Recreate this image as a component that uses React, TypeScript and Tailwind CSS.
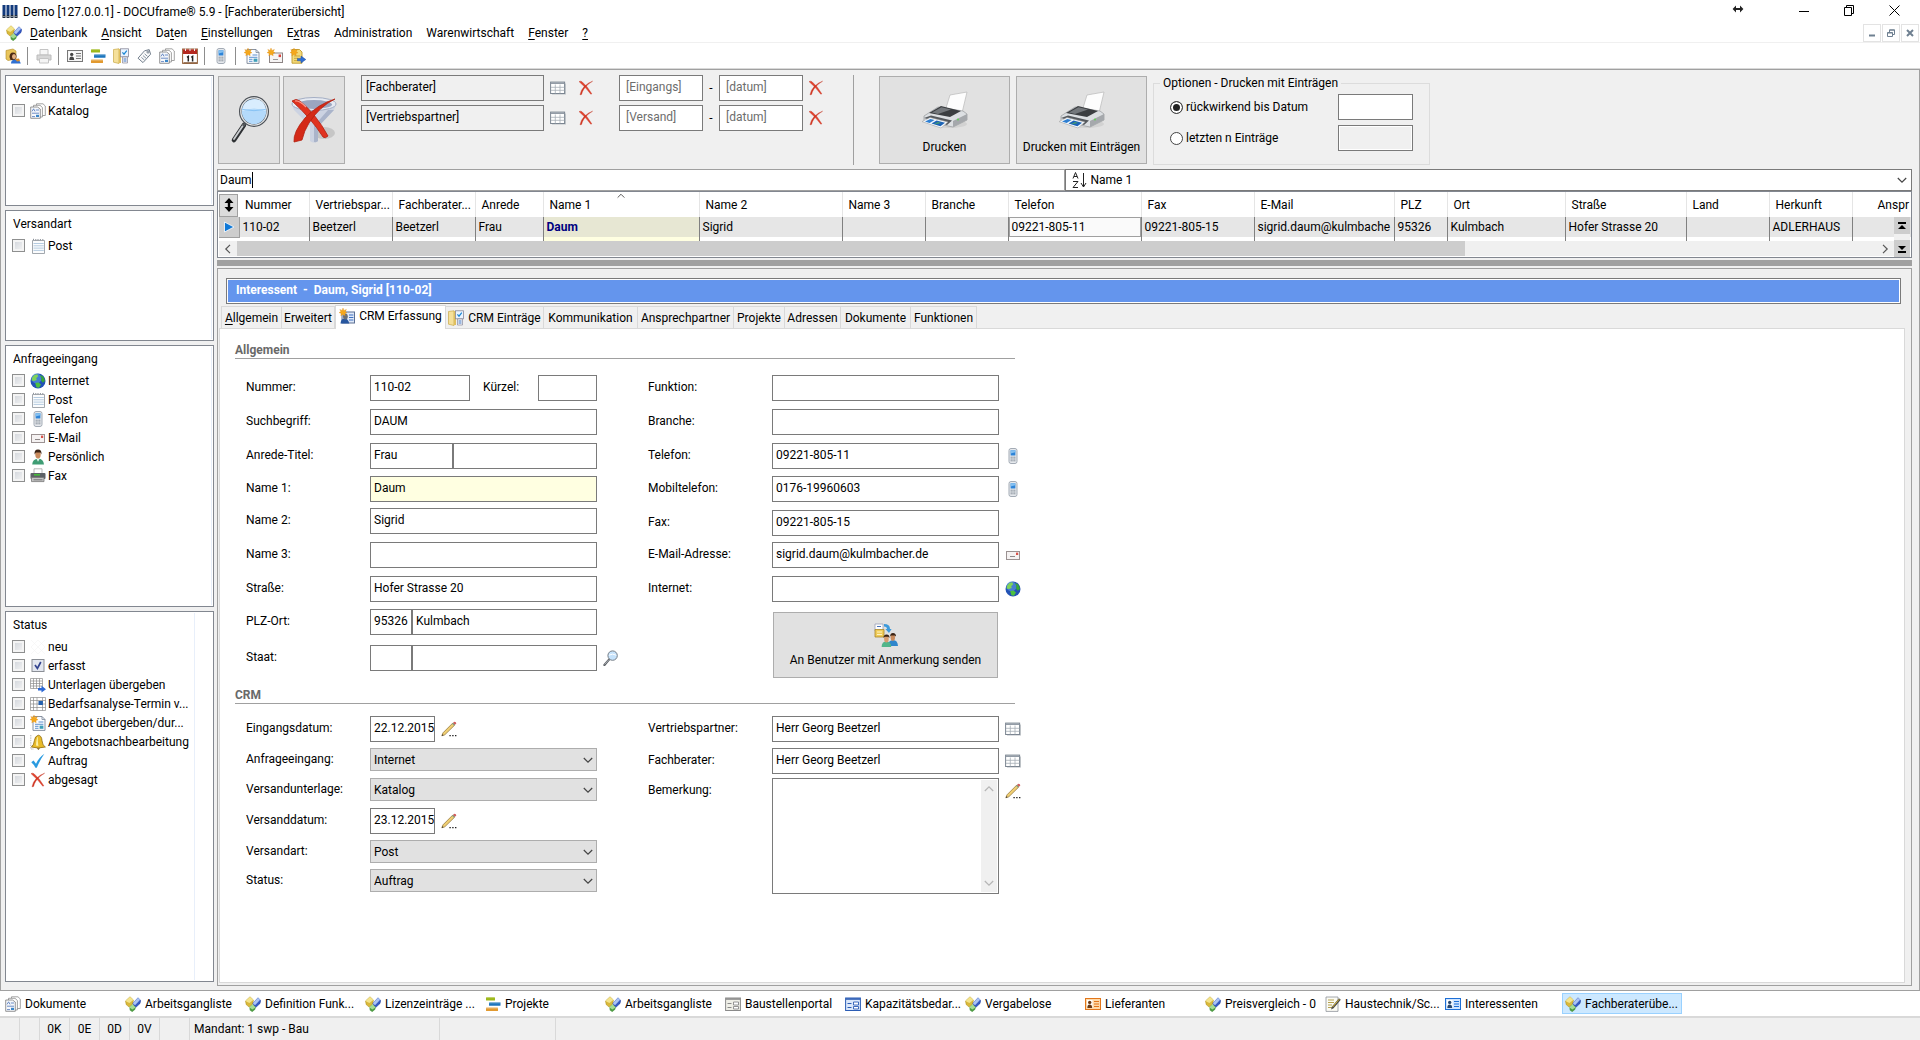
import type { ReactNode } from "react";

interface IconProps {
  className?: string;
}

interface SvgProps extends IconProps {
  box?: string;
  children: ReactNode;
}

const Svg = ({ box = "0 0 16 16", className = "size-4", children }: SvgProps) => (
  <svg viewBox={box} className={`shrink-0 ${className}`} fill="none" aria-hidden="true">
    {children}
  </svg>
);

/* ---------- icons ---------- */

const LogoIcon = () => (
  <Svg>
    {[0, 4, 8, 12].map((x) => (
      <g key={x}>
        <rect x={x + 0.5} y="1" width="3" height="10" fill="#123a7c" />
        <rect x={x + 0.5} y="11" width="3" height="3" fill="#1d2b3d" />
        <rect x={x + 1.5} y="12" width="1" height="1" fill="#dfe8f5" />
      </g>
    ))}
  </Svg>
);

const CubesIcon = () => (
  <Svg>
    <path d="M0.5 5 5 0.8 8.4 4 7.8 8 4 11 1.2 8.6Z" fill="#d9b93a" stroke="#a98d1f" strokeWidth=".5" />
    <path d="M0.5 5 5 0.8 8.4 4 4.3 7Z" fill="#f3e48d" />
    <path d="M7.8 7.2 13 1.8 15.8 4.6 15 7.5 10.2 12Z" fill="#3458c4" stroke="#22409b" strokeWidth=".5" />
    <path d="M7.8 7.2 13 1.8 15.2 3.8 10 9.2Z" fill="#a9c3f5" />
    <path d="M4.4 11.4 7.3 8.6 10.8 11.2 10.2 13.6 7.2 16 4.8 14.2Z" fill="#4f9b45" />
    <path d="M4.4 11.4 7.3 8.6 10.8 11.2 7.4 13.4Z" fill="#a6dc92" />
  </Svg>
);

const UserIcon = () => (
  <Svg>
    <path d="M1 2.5 8 1 11 3V11L3 12.5 1 11Z" fill="#e9c55c" stroke="#b08a22" strokeWidth=".6" />
    <path d="M4.5 9Q4.5 4.5 8 4.5T11.5 9L10 12H5.5Z" fill="#4b2a16" />
    <ellipse cx="9" cy="8.6" rx="2" ry="2.6" fill="#e3b184" />
    <path d="M6 15.5Q6 11.5 10.4 11.5T15.8 15.5Z" fill="#2f6fd0" />
    <path d="M10 11 14 10.5 15 13 12 13.5Z" fill="#d98c2b" />
  </Svg>
);

const PrinterGrayIcon = () => (
  <Svg>
    <path d="M4 1.5H12V7H4Z" fill="#f6f6f6" stroke="#c4c4c4" />
    <path d="M1 7H15V12H1Z" fill="#d6d6d6" stroke="#bcbcbc" />
    <path d="M3.5 10.5H12.5V15H3.5Z" fill="#f4f4f4" stroke="#c4c4c4" />
  </Svg>
);

const CardIcon = ({ frame = "#777", fill = "#f4f4f4", ink = "#444" }) => (
  <Svg>
    <rect x=".5" y="2.5" width="15" height="11" fill={fill} stroke={frame} />
    <rect x="2" y="4" width="5.5" height="8" fill="#fff" />
    <circle cx="4.7" cy="6.4" r="1.7" fill={ink} />
    <path d="M2.3 12Q2.3 8.6 4.7 8.6T7.2 12Z" fill={ink} />
    <path d="M9 5.5H14M9 8H14M9 10.5H14" stroke={frame} />
  </Svg>
);

const BlueCardIcon = () => <CardIcon frame="#1d6fd6" fill="#cfe4ff" ink="#27476f" />;
const OrangeCardIcon = () => <CardIcon frame="#e2761b" fill="#ffd9a8" ink="#6b3a14" />;

const BarsIcon = () => (
  <Svg>
    <rect x="1" y="1" width="9" height="3.6" rx=".5" fill="#9db818" />
    <rect x="4" y="6.2" width="11.5" height="3.6" rx=".5" fill="#1c75bd" />
    <rect x="1" y="11.4" width="12" height="3.6" rx=".5" fill="#e29a30" />
    <path d="M1 1.6H10M4 6.8H15M1 12H13" stroke="#fff" strokeOpacity=".4" />
  </Svg>
);

const FolderCheckIcon = () => (
  <Svg>
    <path d="M.5 1.5 6 .8V15.5L.5 14.2Z" fill="#f5e09a" stroke="#c9a947" strokeWidth=".7" />
    <path d="M6 1H8V15H6Z" fill="#e0bf5e" />
    <rect x="7.5" y=".8" width="8" height="8" fill="#eaf4ff" stroke="#889" strokeWidth=".8" />
    <path d="M9.4 4.4 11 6.2 13.8 2.6" stroke="#1b87d4" strokeWidth="1.2" />
    <path d="M9.5 9H14.5V15H9.5Z" fill="#f7f7f7" stroke="#889" strokeWidth=".7" />
    <path d="M10.5 11H13.5M10.5 13H13.5" stroke="#3e76c7" />
  </Svg>
);

const TagIcon = () => (
  <Svg>
    <path d="M8.5 2.8 13.2 1.6 14.6 6.2 7 14.6 2 10.2Z" fill="#fafafa" stroke="#76828f" />
    <circle cx="12" cy="4" r="1.1" stroke="#76828f" />
    <path d="M5.4 9.4 8.4 12M7 7.6 10 10.2M8.6 5.8 11.5 8.4" stroke="#8795a3" />
  </Svg>
);

const DocsIcon = () => (
  <Svg>
    <path d="M6.5.8H13L15.3 3V12.5H6.5Z" fill="#fff" stroke="#8b8b8b" strokeWidth=".8" />
    <path d="M3.5 2.3H10L12.4 4.5V14H3.5Z" fill="#fff" stroke="#8b8b8b" strokeWidth=".8" />
    <path d="M.7 4H7.5L10.3 6V15.3H.7Z" fill="#f6f8fc" stroke="#7c7c7c" strokeWidth=".8" />
    <path d="M2 8.4 3.6 5.8 5 8.4M5.8 7H9M2 10.2H9M2 13.6H5" stroke="#4a72b8" strokeWidth=".8" />
    <rect x="6" y="11.8" width="3" height="2.2" fill="#3b86c9" />
  </Svg>
);

const CalendarIcon = () => (
  <Svg>
    <rect x=".6" y="1" width="14.8" height="14.4" fill="#fff" stroke="#94623a" />
    <rect x="1" y="1.4" width="14" height="4.6" fill="#b5281f" />
    <path d="M3.5.5V3M8 .5V3M12.5.5V3" stroke="#eee" />
    <path d="M5 9.3 6.3 8.4V13.5M9.3 9.3 10.6 8.4V13.5" stroke="#222" strokeWidth="1.5" />
    <path d="M1.5 14.8H15" stroke="#7d4d2a" />
  </Svg>
);

const PhoneIcon = () => (
  <Svg>
    <rect x="4" y=".5" width="8" height="15" rx="2" fill="#e6e9ed" stroke="#a3abb5" />
    <rect x="5.6" y="2.3" width="4.8" height="5.2" fill="#2d84d8" />
    <path d="M5.6 2.3H10.4V4.2L5.6 5.5Z" fill="#83bff0" />
    {[9.2, 11, 12.8].map((y) => (
      <path key={y} d={`M5.6 ${y}H10.4`} stroke="#76808c" strokeDasharray="1.2 .6" />
    ))}
  </Svg>
);

const Spark = () => (
  <path
    d="M4 0 4.9 2.4 7.4 1.4 6.3 3.7 8 4.8 5.9 5.4 6.2 7.8 4 6.6 1.8 7.8 2.1 5.4 0 4.6 1.9 3.6.8 1.4 3.1 2.4Z"
    fill="#f5a81c"
    stroke="#d8860d"
    strokeWidth=".3"
  />
);

const NewDocIcon = () => (
  <Svg>
    <path d="M3 1.5H12L15 4.5V15.4H3Z" fill="#fafcff" stroke="#7c8797" strokeWidth=".9" />
    <path d="M12 1.5V4.5H15" stroke="#7c8797" strokeWidth=".8" />
    <path d="M8.5 7H13.4M5 9.3H13.4M5 11.3H8.5M5 13.3H8.5" stroke="#5f91cf" />
    <rect x="9.6" y="10.6" width="3.8" height="3.2" fill="#3f9fb8" />
    <Spark />
  </Svg>
);

const NewMailIcon = () => (
  <Svg>
    <rect x="2.5" y="5" width="13" height="9.5" fill="#f6f4f4" stroke="#8d8585" />
    <rect x="11.6" y="6.5" width="2.4" height="2.6" fill="#d9433b" />
    <path d="M6 11.5H11" stroke="#9a9a9a" />
    <Spark />
  </Svg>
);

const NewFolderIcon = () => (
  <Svg>
    <path d="M2 1.5H9.5L12 4V15.2H2Z" fill="#f4da7a" stroke="#be9a2c" strokeWidth=".9" />
    <path d="M4 8H10M4 10.3H8M4 12.6H8" stroke="#cda93c" />
    <path d="M7.5 10.4H11V8L15.8 11.5 11 15V12.8H7.5Z" fill="#2f6fd6" stroke="#1b4a9c" strokeWidth=".5" />
    <Spark />
  </Svg>
);

const NotepadIcon = () => (
  <Svg>
    <path d="M2.5 2.5H14.5V15.5H2.5Z" fill="#fbfcfd" stroke="#8c9299" strokeWidth=".8" />
    <path d="M3.5 2V.8M5.8 2.4V1M8 2.4V1M10.4 2.4V1M12.8 2.4V1" stroke="#8c9299" />
    <path d="M3.5 5.5H13.8M3.5 7.8H13.8M3.5 10.1H13.8M3.5 12.4H13.8" stroke="#b4cbe0" />
  </Svg>
);

const GlobeIcon = () => (
  <Svg>
    <circle cx="8" cy="8" r="7.5" fill="#2352b5" />
    <circle cx="6.5" cy="5.5" r="5" fill="#5d9fe6" fillOpacity=".6" />
    <path d="M2.2 4.5Q4 1.4 7.2 1.3L8.2 3.2 6.2 5.2 6.8 7 4 8 1.6 7.4Z" fill="#7fd35a" />
    <path d="M9.8 2.3 12.6 3Q15 5.4 14.9 8L12.8 9.8 11 7.2 11.6 5Z" fill="#38a836" />
    <path d="M5.2 10 8.6 9.4 11 11.5 9 14.7 6.4 14.3Z" fill="#4cc13f" />
  </Svg>
);

const MailIcon = () => (
  <Svg>
    <rect x="1.5" y="4.5" width="13" height="8" fill="#f5f2f2" stroke="#9b9292" />
    <rect x="11" y="5.6" width="2.2" height="2.4" fill="#d9534b" />
    <path d="M5 9.5H10" stroke="#8e8888" />
  </Svg>
);

const PersonIcon = () => (
  <Svg>
    <path d="M2.2 15.6Q2.6 10 8 9.8T14 15.6Z" fill="#3f9d74" />
    <path d="M6.4 9.6 8 12.8 9.8 9.6Z" fill="#e9f5ef" />
    <ellipse cx="8" cy="5.6" rx="2.7" ry="4" fill="#c98a5c" />
    <path d="M4.6 5.4Q4 .4 8 .4T11.4 5.4L10.4 3.4H6Z" fill="#3a2213" />
  </Svg>
);

const FaxIcon = () => (
  <Svg>
    <path d="M4 .8H12V6H4Z" fill="#fff" stroke="#a5a5a5" strokeWidth=".8" />
    <rect x=".5" y="5" width="15" height="6" rx="1" fill="#5d6166" />
    <rect x="4" y="6" width="6" height="1.6" fill="#46b93a" />
    <path d="M1.5 9.5H14V13.6H1.5Z" fill="#c4c4c4" stroke="#777" strokeWidth=".8" />
    <path d="M3.5 11.8H12.5" stroke="#777" />
  </Svg>
);

const EmptyIcon = () => (
  <Svg>
    <path d="M1 1 15 15M15 1 1 15M8 1 15 8 8 15 1 8Z" stroke="#f4f4f4" strokeWidth=".6" />
  </Svg>
);

const CheckedIcon = () => (
  <Svg>
    <rect x="2" y="1.5" width="12" height="12" fill="#e3e7ef" stroke="#8b8f96" />
    <path d="M5 7 7.4 10.4 10.8 4" stroke="#33448f" strokeWidth="1.7" />
  </Svg>
);

const TableArrowIcon = () => (
  <Svg>
    <path d="M.5 1.5H12.5V11.5H.5ZM.5 4H12.5M.5 6.5H12.5M.5 9H12.5M3.5 1.5V11.5M6.5 1.5V11.5M9.5 1.5V11.5" stroke="#8b8b8b" fill="#fff" strokeWidth=".7" />
    <path d="M8 11H11.5V8.8L16 12.2 11.5 15.6V13.4H8Z" fill="#2c68d4" />
  </Svg>
);

const TableCellIcon = () => (
  <Svg>
    <path d="M.5 1.5H15.5V14.5H.5ZM.5 4.5H15.5M.5 8H15.5M.5 11.5H15.5M3.5 1.5V14.5M7 1.5V14.5M12.5 1.5V14.5" stroke="#8b8b8b" fill="#fff" strokeWidth=".7" />
    <rect x="8.5" y="5" width="4.4" height="4" fill="#2461ae" />
  </Svg>
);

const BellIcon = () => (
  <Svg>
    <path d="M.8 1V15H4" stroke="#b5b5b5" strokeDasharray="1.4 1" />
    <path d="M1.4 13Q4 11 4.4 6.6T8.2 1.2Q11.6 1.4 12 6.6T15.4 13Q8 15 1.4 13Z" fill="#e8bb2a" stroke="#8f6c10" strokeWidth=".8" />
    <path d="M6 11.5Q6.3 4 8 2.6 7.4 7 8.4 12Z" fill="#fbf0a8" />
    <path d="M6.8 14.2H10L8.4 16Z" fill="#7b5c10" />
  </Svg>
);

const TickIcon = () => (
  <Svg>
    <path d="M1.2 9.2 3.6 7.6 6 10.8Q9 4.4 14.4.8 10 7 6.8 14.8H5.4Q4 11.4 1.2 9.2Z" fill="#2a9be0" />
  </Svg>
);

const CrossIcon = () => (
  <Svg>
    <path d="M1 1.6Q2.6.7 4 1.7 9.6 6.4 13.8 13.8L12.8 14.2Q7.8 7.4 1 1.6Z" fill="#e2412c" stroke="#c23524" strokeWidth=".4" />
    <path d="M14.6 1.2Q9.6 3.6 5.8 9.2 4 12 3.6 14.4L2 14.8Q2.6 10.4 6.2 6.6 9.6 2.8 14.6 1.2Z" fill="#d6331f" stroke="#c23524" strokeWidth=".4" />
  </Svg>
);

const GridIcon = () => (
  <Svg>
    <path d="M2 3.5H16V14.6H2Z" fill="#c5c9cd" />
    <rect x=".6" y="2.1" width="14" height="11.4" fill="#fff" stroke="#7b8591" />
    <path d="M1 3.2H14.2" stroke="#939ca6" strokeWidth="1.6" />
    <path d="M1 7.3H14.4M1 10.3H14.4M5.3 4.5V13.4M10 4.5V13.4" stroke="#a6adb5" strokeWidth=".8" />
  </Svg>
);

const PencilIcon = () => (
  <Svg>
    <path d="M.8 14.8 2 11.8 11.8 2 13.8 4 3.8 13.8Z" fill="#f0cf72" stroke="#8a6c32" strokeWidth=".7" />
    <path d="M11 2.8 12 1.8 14 3.8 13 4.8Z" fill="#7fa08a" />
    <path d="M12 1.8 13.4.7Q15.2.6 15.3 2.4L14 3.8Z" fill="#d15b5b" />
    <path d="M.8 14.8 1.4 13.2 2.5 14.2Z" fill="#222" />
    <path d="M8.4 14.6H16" stroke="#222" strokeWidth="1.2" strokeDasharray="1.4 1.4" />
  </Svg>
);

const NotePencilIcon = () => (
  <Svg>
    <path d="M1 1H13V15.4H1Z" fill="#fbfbf4" stroke="#8d9299" strokeWidth=".8" />
    <path d="M3 4H9M3 6.5H9M3 9H7M3 11.5H7" stroke="#b6a14e" />
    <path d="M6 13.6 7 10.6 14 2.2 15.8 3.8 8.6 12.2Z" fill="#4a4a4a" />
    <path d="M7.6 11 14.2 3.2" stroke="#d9b93a" />
  </Svg>
);

const LensIcon = () => (
  <Svg>
    <path d="M1.4 15 6.2 9.4" stroke="#5c6065" strokeWidth="2.2" strokeLinecap="round" />
    <path d="M1.6 14.4 6 9.6" stroke="#c2c5ca" strokeWidth=".8" />
    <circle cx="9.6" cy="5.6" r="4.7" fill="#c5e2fb" stroke="#777e86" />
    <path d="M6 5.2Q9.6 3 13.2 5.2" stroke="#fff" />
  </Svg>
);

const BigLensIcon = () => (
  <Svg box="0 0 48 48" className="size-12">
    <path d="M9 44 19 29" stroke="#2e3134" strokeWidth="4.6" strokeLinecap="round" />
    <path d="M9 43 18.4 29" stroke="#c9cccf" strokeWidth="1.8" strokeLinecap="round" />
    <path d="M18 30 22 25" stroke="#55595d" strokeWidth="2.4" />
    <ellipse cx="29" cy="15.5" rx="13.6" ry="14" fill="#b4dafb" stroke="#4a4f55" strokeWidth="2.8" />
    <ellipse cx="29" cy="15.5" rx="13.2" ry="13.6" stroke="#e2e5e8" strokeWidth="1.4" />
    <path d="M17.4 15Q18 4 29 3.4T40.6 15Q29 10 17.4 15Z" fill="#d9edfe" />
    <path d="M17.4 13.4Q29 16 40.6 13.4" stroke="#7bbcf3" strokeWidth=".8" />
  </Svg>
);

const FunnelIcon = () => (
  <Svg box="0 0 48 48" className="size-12">
    <ellipse cx="34" cy="37" rx="11" ry="6" fill="#c6c6c6" />
    <path d="M2 9 4 14 20 30V45Q24 48 28 45V30L44 14 46 9Z" fill="#ccd3e2" />
    <path d="M30 29 44 14 38 14 24 30V46Q27 46.5 28 45V31Z" fill="#aab4ca" />
    <ellipse cx="24" cy="8" rx="22" ry="6.5" fill="#e6eaf2" stroke="#a4aec4" />
    <ellipse cx="24" cy="8.5" rx="18" ry="4.4" fill="#9ba6c0" />
    <path d="M2 5Q6 2 10 5 26 18 38 40 35 43 33 41 21 22 2 5Z" fill="#e03320" stroke="#b3200f" strokeWidth=".8" />
    <path d="M45 3Q30 10 19 27 14 35 12 44L4 46Q3 36 15 22 28 8 45 3Z" fill="#d42a17" stroke="#b3200f" strokeWidth=".8" />
    <path d="M5 5Q9 4 16 11" stroke="#f79a8e" strokeWidth="1.2" />
  </Svg>
);

const BigPrinterIcon = () => (
  <Svg box="0 0 48 40" className="h-10 w-12">
    <ellipse cx="28" cy="33" rx="18" ry="4" fill="#d2d2d2" />
    <path d="M29 4 46 1 41 22 25 17Z" fill="#fdfdfd" stroke="#b9b9b9" strokeWidth=".7" />
    <path d="M3 25 17 16 42 20 46 23V29L32 36 3 30Z" fill="#dcdfe2" stroke="#96999c" strokeWidth=".7" />
    <path d="M8 22 20 15 40 20 29 26Z" fill="#3b3e41" />
    <path d="M11 21.5 20.4 16.2 30 18.6 17 23Z" fill="#74787c" />
    <path d="M32 30 46 23V29L32 36Z" fill="#a5a8ac" />
    <path d="M3 27 10 24.6 31 29.6 26 34Z" fill="#55595d" />
    <path d="M1 30.6 9 26.5 27 31 20 37Z" fill="#f4f8fc" stroke="#9a9a9a" strokeWidth=".5" />
    <path d="M4 30.6 9.4 28 13.6 29 8.6 32Z" fill="#2f7fd1" />
    <path d="M10.5 32.6 15.6 29.6 24 31.8 19.4 35.2Z" fill="#1c63b6" />
    <path d="M13 33 17 31.2 20 32Z" fill="#5cb84f" />
    <circle cx="37" cy="28.6" r="1" fill="#5fd254" />
  </Svg>
);

const SendUserIcon = () => (
  <Svg box="0 0 24 24" className="size-6">
    <path d="M1 1H9V8H1Z" fill="#fff" stroke="#98a0b8" strokeWidth=".8" />
    <path d="M3 3.5H7" stroke="#4a72b8" />
    <path d="M1 6.5H10V14H1Z" fill="#efcb57" stroke="#a8862a" strokeWidth=".8" />
    <path d="M3 9H8M3 11.5H8" stroke="#fff3c0" />
    <path d="M10 1Q16 1 16 6H17.6L15 10 11.4 6H13Q13 3.6 10 3.4Z" fill="#3c9adb" />
    <path d="M14 23Q14.4 17 19 17T24 23Z" fill="#2f86cc" />
    <ellipse cx="18.8" cy="14.4" rx="2.2" ry="3.4" fill="#c98a5c" />
    <path d="M16.2 13.6Q16 10 19 10T22 13.6L20.6 12.4H17.2Z" fill="#3a2213" />
    <path d="M7.6 24Q7.8 18.6 12.4 18.6T17.2 24Z" fill="#52b58a" />
    <ellipse cx="12.4" cy="16" rx="2.3" ry="3.4" fill="#d79c6e" />
    <path d="M9.6 15Q9.4 11.4 12.6 11.4T15.4 15L14.2 13.8H10.8Z" fill="#3a2213" />
  </Svg>
);

const CrmIcon = () => (
  <Svg>
    <rect x="3" y="4" width="12.5" height="11" fill="#dfe9f8" stroke="#5b6f93" />
    <path d="M10 7H14.4M10 9.5H14.4M10 12H14.4" stroke="#3d6fc0" />
    <path d="M1.5 15.5Q2 10.5 5.6 10.5T10.2 15.5Z" fill="#27569f" />
    <ellipse cx="6.4" cy="8.4" rx="2.4" ry="3" fill="#6b7076" />
    <Spark />
  </Svg>
);

const FormIcon = ({ frame = "#8a8a8a", fill = "#f0f0e8" }) => (
  <Svg>
    <rect x=".6" y="2" width="14.8" height="12.5" fill={fill} stroke={frame} />
    <path d="M1 3H15" stroke={frame} strokeWidth="1.6" />
    <path d="M2.5 7.5H6.5M2.5 11.5H6.5" stroke={frame} />
    <path d="M8.5 6H13.5V9H8.5ZM8.5 10.5H13.5V13H8.5Z" fill="#fff" stroke={frame} strokeWidth=".9" />
  </Svg>
);

const BlueFormIcon = () => <FormIcon frame="#2b5cb4" fill="#dbe8fb" />;

const ChevronIcon = ({ className = "size-[10px]" }: IconProps) => (
  <Svg box="0 0 10 10" className={className}>
    <path d="M.8 3 5 7.2 9.2 3" stroke="currentColor" strokeWidth="1.2" />
  </Svg>
);

/* ---------- small controls ---------- */

const fieldBase = "h-[26px] border border-[#7a7a7a] bg-white pl-[3px] pb-[2px] outline-none";

const TickBox = ({ id }: { id: string }) => (
  <input
    id={id}
    type="checkbox"
    className="size-[13px] shrink-0 appearance-none border border-[#8e8f8f] bg-linear-to-br from-[#cfd3d9] to-[#f6f6f6] shadow-[inset_0_0_0_2px_#f4f4f4]"
  />
);

interface ListItem {
  label: string;
  icon: ReactNode;
}

interface FilterListProps {
  title: string;
  items: ListItem[];
  className: string;
}

const FilterList = ({ title, items, className }: FilterListProps) => (
  <section className={`border border-[#828790] bg-white p-px ${className}`}>
    <div className="h-full border-r border-[#e8effa] pt-[3px]">
      <h2 className="h-[21px] pl-[6px] leading-[19px]">{title}</h2>
      <ul>
        {items.map((item) => {
          const id = `${title}-${item.label}`;
          return (
            <li key={item.label} className="flex h-[19px] items-center pl-[5px]">
              <TickBox id={id} />
              <label htmlFor={id} className="ml-[5px] flex items-center gap-[2px] whitespace-nowrap">
                {item.icon}
                {item.label}
              </label>
            </li>
          );
        })}
      </ul>
    </div>
  </section>
);

interface SelectProps {
  id: string;
  value: string;
}

const Select = ({ id, value }: SelectProps) => (
  <div className="relative w-[227px]">
    <select id={id} defaultValue={value} className="h-[23px] w-full appearance-none border border-[#adadad] bg-[#e1e1e1] pl-[3px] outline-none">
      <option>{value}</option>
    </select>
    <ChevronIcon className="pointer-events-none absolute top-[7px] right-1 size-[10px] text-[#444]" />
  </div>
);

interface RowProps {
  label: string;
  id: string;
  icon?: ReactNode;
  className?: string;
  children: ReactNode;
}

const Row = ({ label, id, icon, className = "mt-2", children }: RowProps) => (
  <div className={`flex items-center ${className}`}>
    <label htmlFor={id} className="w-[124px] shrink-0 pb-[2px]">{label}</label>
    {children}
    {icon && <button type="button" aria-label={label} className="ml-[6px]">{icon}</button>}
  </div>
);

interface TextProps {
  id: string;
  value?: string;
  className?: string;
}

const Text = ({ id, value = "", className = "w-[227px]" }: TextProps) => (
  <input id={id} defaultValue={value} className={`${fieldBase} ${className}`} />
);

/* ---------- data ---------- */

const menuItems: [string, string, string][] = [
  ["", "D", "atenbank"],
  ["", "A", "nsicht"],
  ["Da", "t", "en"],
  ["", "E", "instellungen"],
  ["E", "x", "tras"],
  ["Administration", "", ""],
  ["Warenwirtschaft", "", ""],
  ["", "F", "enster"],
  ["", "?", ""],
];

const toolGroups: ReactNode[][] = [
  [<UserIcon />],
  [<PrinterGrayIcon />],
  [<CardIcon />, <BarsIcon />, <FolderCheckIcon />, <TagIcon />, <DocsIcon />, <CalendarIcon />],
  [<PhoneIcon />],
  [<NewDocIcon />, <NewMailIcon />, <NewFolderIcon />],
];

const inquiryItems: ListItem[] = [
  { label: "Internet", icon: <GlobeIcon /> },
  { label: "Post", icon: <NotepadIcon /> },
  { label: "Telefon", icon: <PhoneIcon /> },
  { label: "E-Mail", icon: <MailIcon /> },
  { label: "Persönlich", icon: <PersonIcon /> },
  { label: "Fax", icon: <FaxIcon /> },
];

const statusItems: ListItem[] = [
  { label: "neu", icon: <EmptyIcon /> },
  { label: "erfasst", icon: <CheckedIcon /> },
  { label: "Unterlagen übergeben", icon: <TableArrowIcon /> },
  { label: "Bedarfsanalyse-Termin v...", icon: <TableCellIcon /> },
  { label: "Angebot übergeben/dur...", icon: <NewDocIcon /> },
  { label: "Angebotsnachbearbeitung", icon: <BellIcon /> },
  { label: "Auftrag", icon: <TickIcon /> },
  { label: "abgesagt", icon: <CrossIcon /> },
];

const columns = [
  { title: "Nummer", value: "110-02", width: "w-[70px]" },
  { title: "Vertriebspar...", value: "Beetzerl", width: "w-[83px]" },
  { title: "Fachberater...", value: "Beetzerl", width: "w-[83px]" },
  { title: "Anrede", value: "Frau", width: "w-[68px]" },
  { title: "Name 1", value: "Daum", width: "w-[156px]" },
  { title: "Name 2", value: "Sigrid", width: "w-[143px]" },
  { title: "Name 3", value: "", width: "w-[83px]" },
  { title: "Branche", value: "", width: "w-[83px]" },
  { title: "Telefon", value: "09221-805-11", width: "w-[133px]" },
  { title: "Fax", value: "09221-805-15", width: "w-[113px]" },
  { title: "E-Mail", value: "sigrid.daum@kulmbache", width: "w-[140px]" },
  { title: "PLZ", value: "95326", width: "w-[53px]" },
  { title: "Ort", value: "Kulmbach", width: "w-[118px]" },
  { title: "Straße", value: "Hofer Strasse 20", width: "w-[121px]" },
  { title: "Land", value: "", width: "w-[83px]" },
  { title: "Herkunft", value: "ADLERHAUS", width: "w-[83px]" },
];

const tabs = [
  { title: "Allgemein", width: "w-[61px]" },
  { title: "Erweitert", width: "w-[53px]" },
  { title: "CRM Erfassung", width: "w-[111px]", icon: <CrmIcon /> },
  { title: "CRM Einträge", width: "w-[98px]", icon: <FolderCheckIcon /> },
  { title: "Kommunikation", width: "w-[94px]" },
  { title: "Ansprechpartner", width: "w-[96px]" },
  { title: "Projekte", width: "w-[51px]" },
  { title: "Adressen", width: "w-[56px]" },
  { title: "Dokumente", width: "w-[70px]" },
  { title: "Funktionen", width: "w-[66px]" },
];

const openWindows: ListItem[] = [
  { label: "Dokumente", icon: <DocsIcon /> },
  { label: "Arbeitsgangliste", icon: <CubesIcon /> },
  { label: "Definition Funk...", icon: <CubesIcon /> },
  { label: "Lizenzeinträge ...", icon: <CubesIcon /> },
  { label: "Projekte", icon: <BarsIcon /> },
  { label: "Arbeitsgangliste", icon: <CubesIcon /> },
  { label: "Baustellenportal", icon: <FormIcon /> },
  { label: "Kapazitätsbedar...", icon: <BlueFormIcon /> },
  { label: "Vergabelose", icon: <CubesIcon /> },
  { label: "Lieferanten", icon: <OrangeCardIcon /> },
  { label: "Preisvergleich - 0", icon: <CubesIcon /> },
  { label: "Haustechnik/Sc...", icon: <NotePencilIcon /> },
  { label: "Interessenten", icon: <BlueCardIcon /> },
  { label: "Fachberaterübe...", icon: <CubesIcon /> },
];

const statusCells = [
  { text: "", width: "w-5" },
  { text: "", width: "w-5" },
  { text: "0K", width: "w-[30px]" },
  { text: "0E", width: "w-[30px]" },
  { text: "0D", width: "w-[30px]" },
  { text: "0V", width: "w-[30px]" },
  { text: "", width: "w-[30px]" },
  { text: "Mandant: 1 swp - Bau", width: "w-[250px]" },
  { text: "", width: "w-[116px]" },
];

/* ---------- page parts ---------- */

const TitleBar = () => (
  <header>
    <div className="flex h-6 items-center pr-5 pl-[2px]">
      <LogoIcon />
      <h1 className="ml-[5px]">Demo [127.0.0.1] - DOCUframe® 5.9 - [Fachberaterübersicht]</h1>
      <Svg box="0 0 12 8" className="mr-[55px] mb-[6px] ml-auto h-2 w-3">
        <path d="M3.5 4H8.5" stroke="#222" strokeWidth="2" />
        <path d="M4 .6V7.4L.6 4ZM8 .6V7.4L11.4 4Z" fill="#222" />
      </Svg>
      <div className="flex items-center gap-[34px] pb-1">
        <button type="button" aria-label="Minimieren">
          <Svg box="0 0 11 11" className="size-[11px]"><path d="M0 6.5H10" stroke="#000" /></Svg>
        </button>
        <button type="button" aria-label="Wiederherstellen">
          <Svg box="0 0 11 11" className="size-[11px]"><path d="M.5 2.5H7.5V10.5H.5ZM2.5 2.5V.5H9.5V8.5H7.5" stroke="#000" /></Svg>
        </button>
        <button type="button" aria-label="Schließen">
          <Svg box="0 0 11 11" className="size-[11px]"><path d="M.5.5 10.5 10.5M10.5.5.5 10.5" stroke="#000" /></Svg>
        </button>
      </div>
    </div>
    <div className="flex h-[19px] items-center border-b border-[#f0f0f0] pl-[6px]">
      <CubesIcon />
      <nav className="ml-2 flex gap-[14px]">
        {menuItems.map(([before, key, after]) => (
          <button key={before + key + after} type="button">
            {before}
            <u className="underline-offset-2">{key}</u>
            {after}
          </button>
        ))}
      </nav>
      <div className="ml-auto flex gap-px pr-px text-[#6f8091]">
        <button type="button" aria-label="Fenster minimieren" className="flex size-[18px] items-center justify-center border border-[#e3e3e3]">
          <Svg box="0 0 8 8" className="size-2"><path d="M1 6.5H7" stroke="currentColor" strokeWidth="2" /></Svg>
        </button>
        <button type="button" aria-label="Fenster wiederherstellen" className="flex size-[18px] items-center justify-center border border-[#e3e3e3]">
          <Svg box="0 0 8 8" className="size-2"><path d="M.5 3.5H5.5V7.5H.5ZM2.5 3V.8H7.5V5.5H6M.5 4H5.5M2.5 1.2H7.5" stroke="currentColor" /></Svg>
        </button>
        <button type="button" aria-label="Fenster schließen" className="flex size-[18px] items-center justify-center border border-[#e3e3e3]">
          <Svg box="0 0 8 8" className="size-2"><path d="M1 1 7 7M7 1 1 7" stroke="currentColor" strokeWidth="2" /></Svg>
        </button>
      </div>
    </div>
    <div className="flex h-[26px] items-center border-b border-[#d9d9d9] pl-[5px]">
      {toolGroups.map((group, i) => (
        <div key={i} className={`flex items-center gap-[7px] ${i > 0 ? "ml-[6px] border-l border-[#8d8d8d] py-[1px] pl-2" : ""}`}>
          {group.map((icon, j) => (
            <button key={j} type="button" aria-label={`Werkzeug ${i + 1}.${j + 1}`}>{icon}</button>
          ))}
        </div>
      ))}
    </div>
  </header>
);

const LookupField = ({ value }: { value: string }) => (
  <div className="flex items-center">
    <input
      aria-label={value}
      defaultValue={value}
      readOnly
      className="h-[26px] w-[183px] border border-[#7a7a7a] bg-[#f0f0f0] px-1 pb-[2px] outline-none"
    />
    <button type="button" aria-label="Auswahl" className="ml-[6px]"><GridIcon /></button>
    <button type="button" aria-label="Entfernen" className="ml-3"><CrossIcon /></button>
  </div>
);

const DateRange = ({ from }: { from: string }) => (
  <div className="flex items-center">
    <input aria-label={from} placeholder={from} className="h-[26px] w-[84px] border border-[#7a7a7a] bg-white px-[6px] pb-[3px] outline-none placeholder:text-[#6d6d6d]" />
    <span className="w-4 text-center">-</span>
    <input aria-label={`${from} bis`} placeholder="[datum]" className="h-[26px] w-[84px] border border-[#7a7a7a] bg-white px-[6px] pb-[3px] outline-none placeholder:text-[#6d6d6d]" />
    <button type="button" aria-label="Entfernen" className="ml-[5px]"><CrossIcon /></button>
  </div>
);

const radioStyle =
  "size-[13px] shrink-0 appearance-none rounded-full border border-[#444] bg-white checked:bg-[#222] checked:shadow-[inset_0_0_0_2px_#fff]";

const FilterBar = () => (
  <div className="flex h-[90px] items-start">
    <div className="flex gap-[3px] py-px pl-px">
      <button type="button" aria-label="Suchen" className="flex h-[88px] w-[62px] items-center justify-center border border-[#adadad] bg-[#e1e1e1]">
        <BigLensIcon />
      </button>
      <button type="button" aria-label="Filter löschen" className="flex h-[88px] w-[62px] items-center justify-center border border-[#adadad] bg-[#e1e1e1]">
        <FunnelIcon />
      </button>
    </div>
    <div className="ml-4 flex flex-col gap-1">
      <LookupField value="[Fachberater]" />
      <LookupField value="[Vertriebspartner]" />
    </div>
    <div className="ml-[25px] flex flex-col gap-1">
      <DateRange from="[Eingangs]" />
      <DateRange from="[Versand]" />
    </div>
    <div className="ml-[29px] h-[90px] border-l border-[#a0a0a0]" />
    <div className="flex gap-[6px] py-px pl-[25px]">
      {["Drucken", "Drucken mit Einträgen"].map((label) => (
        <button key={label} type="button" className="flex h-[88px] w-[131px] flex-col items-center border border-[#adadad] bg-[#e1e1e1] pt-[14px] whitespace-nowrap">
          <BigPrinterIcon />
          <span className="mt-2">{label}</span>
        </button>
      ))}
    </div>
    <fieldset className="ml-[6px] h-[90px] w-[277px] border border-[#dcdcdc] px-4">
      <legend className="-ml-[10px] h-4 px-[3px] leading-4">Optionen - Drucken mit Einträgen</legend>
      <div className="flex items-center pt-[3px]">
        <input id="opt-date" name="opt" type="radio" defaultChecked className={radioStyle} />
        <label htmlFor="opt-date" className="ml-[3px] flex-1">rückwirkend bis Datum</label>
        <input aria-label="Datum" className="h-[26px] w-[75px] border border-[#7a7a7a] bg-white" />
      </div>
      <div className="flex items-center pt-[5px]">
        <input id="opt-last" name="opt" type="radio" className={radioStyle} />
        <label htmlFor="opt-last" className="ml-[3px] flex-1">letzten n Einträge</label>
        <input aria-label="Anzahl" disabled className="h-[26px] w-[75px] border border-[#7a7a7a] bg-[#f0f0f0] shadow-[inset_0_0_0_1px_#fff]" />
      </div>
    </fieldset>
  </div>
);

const SearchRow = () => (
  <div className="mt-1 flex h-[22px]">
    <div className="relative w-1/2 border border-[#a0a0a0] bg-white">
      <input aria-label="Suche" defaultValue="Daum" className="h-full w-full px-[2px] outline-none" />
      <span className="absolute top-[2px] left-[34px] h-4 w-px bg-black" />
    </div>
    <div className="relative flex w-1/2 items-center border border-[#7a7a7a] bg-white pl-[5px]">
      <Svg className="pointer-events-none absolute left-[6px] size-4">
        <path d="M1 6.5 3.5.5 6 6.5M2 4.5H5M1 9.5H6L1 15.5H6" stroke="#222" />
        <path d="M11.5 1V15M9 11 11.5 15 14 11" stroke="#222" />
      </Svg>
      <select aria-label="Sortierung" defaultValue="Name 1" className="h-full w-full appearance-none pl-5 outline-none">
        <option>Name 1</option>
      </select>
      <ChevronIcon className="pointer-events-none absolute right-1 size-[10px] text-[#444]" />
    </div>
  </div>
);

const ResultTable = () => (
  <div className="relative border border-[#828790] bg-white pl-px">
    <table className="w-full table-fixed border-collapse">
      <thead>
        <tr className="h-[25px] text-left">
          <th className="w-5 p-0 pt-px pr-px">
            <button type="button" aria-label="Zeilen" className="flex h-[23px] w-full items-center justify-center border border-[#a0a0a0] bg-[#dcdcdc]">
              <Svg box="0 0 10 14" className="h-[14px] w-[10px]">
                <path d="M5 0 9.5 5H6.2V9H9.5L5 14 .5 9H3.8V5H.5Z" fill="#000" />
              </Svg>
            </button>
          </th>
          {columns.map((col) => (
            <th key={col.title} className={`relative border-r border-[#e5e5e5] py-0 pr-0 pl-[6px] font-normal whitespace-nowrap ${col.width}`}>
              {col.title}
              {col.title === "Name 1" && (
                <ChevronIcon className="absolute top-0 left-1/2 size-2 -translate-x-1/2 rotate-180 text-[#555]" />
              )}
            </th>
          ))}
          <th className="overflow-hidden py-0 pr-0 pl-[25px] font-normal">Anspr</th>
        </tr>
      </thead>
      <tbody>
        <tr className="h-5 bg-[#e6e6e6]">
          <td className="border-r border-b border-[#a0a0a0] bg-[#cdcdcd] p-0">
            <Svg box="0 0 12 12" className="ml-1 size-3">
              <path d="M1.5 1 11 6 1.5 11Z" fill="#0f78d7" stroke="#fff" strokeWidth=".8" />
            </Svg>
          </td>
          {columns.map((col) => (
            <td
              key={col.title}
              className={`overflow-hidden border-r border-[#808080] py-0 pr-0 pl-[3px] whitespace-nowrap ${
                col.title === "Name 1" ? "bg-[#e7e7d3] font-bold text-[#000080]" : ""
              } ${col.title === "Telefon" ? "bg-[#fafafa] shadow-[inset_0_0_0_1px_#a0a0a0]" : ""}`}
            >
              {col.value}
            </td>
          ))}
          <td className="p-0" />
        </tr>
        <tr className="h-1">
          <td className="p-0" />
          {columns.map((col) => (
            <td key={col.title} className={`border-r border-[#808080] p-0 ${col.title === "Name 1" ? "bg-[#ffffe1]" : ""}`} />
          ))}
          <td className="p-0" />
        </tr>
      </tbody>
    </table>
    <div className="mr-[17px] mb-px flex h-[15px] items-center bg-[#f0f0f0] text-[#555]">
      <ChevronIcon className="mx-1 size-[10px] rotate-90" />
      <div className="h-full w-11/15 bg-[#cdcdcd]" />
      <ChevronIcon className="mr-1 ml-auto size-[10px] -rotate-90" />
    </div>
    <div className="absolute right-px bottom-0 flex w-4 flex-col gap-[6px] bg-[#f0f0f0]">
      <button type="button" aria-label="Zum Anfang" className="flex h-[17px] items-center justify-center bg-[#cdcdcd]">
        <Svg box="0 0 8 8" className="size-2"><path d="M0 0H8V2H0ZM4 3 8 7H0Z" fill="#000" /></Svg>
      </button>
      <button type="button" aria-label="Zum Ende" className="flex h-[17px] items-center justify-center bg-[#cdcdcd]">
        <Svg box="0 0 8 8" className="size-2"><path d="M0 6H8V8H0ZM4 5 0 1H8Z" fill="#000" /></Svg>
      </button>
    </div>
  </div>
);

const SectionTitle = ({ children }: { children: ReactNode }) => (
  <h3 className="h-4 border-b border-[#a0a0a0] leading-[15px] font-bold text-[#696969]">{children}</h3>
);

const ContactForm = () => (
  <form className="w-[780px] pb-6">
    <SectionTitle>Allgemein</SectionTitle>
    <div className="mt-4 flex pl-[11px]">
      <div className="w-[402px] shrink-0">
        <Row label="Nummer:" id="nummer" className="">
          <Text id="nummer" value="110-02" className="w-[100px]" />
          <label htmlFor="kuerzel" className="w-[68px] pb-[2px] pl-[13px]">Kürzel:</label>
          <Text id="kuerzel" className="w-[59px]" />
        </Row>
        <Row label="Suchbegriff:" id="such">
          <Text id="such" value="DAUM" />
        </Row>
        <Row label="Anrede-Titel:" id="anrede">
          <Text id="anrede" value="Frau" className="w-[83px]" />
          <Text id="titel" className="w-[144px]" />
        </Row>
        <Row label="Name 1:" id="name1" className="mt-[7px]">
          <input id="name1" defaultValue="Daum" className="h-[26px] w-[227px] border border-[#7a7a7a] bg-[#ffffe1] pb-[2px] pl-[3px] outline-none" />
        </Row>
        <Row label="Name 2:" id="name2" className="mt-[6px]">
          <Text id="name2" value="Sigrid" />
        </Row>
        <Row label="Name 3:" id="name3">
          <Text id="name3" />
        </Row>
        <Row label="Straße:" id="strasse">
          <Text id="strasse" value="Hofer Strasse 20" />
        </Row>
        <Row label="PLZ-Ort:" id="plz" className="mt-[7px]">
          <Text id="plz" value="95326" className="w-[42px]" />
          <Text id="ort" value="Kulmbach" className="w-[185px]" />
        </Row>
        <Row label="Staat:" id="staat" className="mt-[10px]" icon={<LensIcon />}>
          <Text id="staat" className="w-[42px]" />
          <Text id="staatname" className="w-[185px]" />
        </Row>
      </div>
      <div className="shrink-0">
        <Row label="Funktion:" id="funktion" className="">
          <Text id="funktion" />
        </Row>
        <Row label="Branche:" id="branche">
          <Text id="branche" />
        </Row>
        <Row label="Telefon:" id="telefon" icon={<PhoneIcon />}>
          <Text id="telefon" value="09221-805-11" />
        </Row>
        <Row label="Mobiltelefon:" id="mobil" className="mt-[7px]" icon={<PhoneIcon />}>
          <Text id="mobil" value="0176-19960603" />
        </Row>
        <Row label="Fax:" id="fax">
          <Text id="fax" value="09221-805-15" />
        </Row>
        <Row label="E-Mail-Adresse:" id="email" className="mt-[6px]" icon={<MailIcon />}>
          <Text id="email" value="sigrid.daum@kulmbacher.de" />
        </Row>
        <Row label="Internet:" id="internet" icon={<GlobeIcon />}>
          <Text id="internet" />
        </Row>
        <button type="button" className="mt-[10px] ml-[125px] flex h-[66px] w-[225px] flex-col items-center border border-[#adadad] bg-[#e1e1e1] pt-[10px] whitespace-nowrap">
          <SendUserIcon />
          <span className="mt-[5px]">An Benutzer mit Anmerkung senden</span>
        </button>
      </div>
    </div>
    <div className="mt-[10px]">
      <SectionTitle>CRM</SectionTitle>
    </div>
    <div className="mt-3 flex pl-[11px]">
      <div className="w-[402px] shrink-0">
        <Row label="Eingangsdatum:" id="eingang" className="" icon={<PencilIcon />}>
          <Text id="eingang" value="22.12.2015" className="w-[65px]" />
        </Row>
        <Row label="Anfrageeingang:" id="anfrage" className="mt-[6px]">
          <Select id="anfrage" value="Internet" />
        </Row>
        <Row label="Versandunterlage:" id="unterlage" className="mt-[7px]">
          <Select id="unterlage" value="Katalog" />
        </Row>
        <Row label="Versanddatum:" id="versand" className="mt-[7px]" icon={<PencilIcon />}>
          <Text id="versand" value="23.12.2015" className="w-[65px]" />
        </Row>
        <Row label="Versandart:" id="versandart" className="mt-[6px]">
          <Select id="versandart" value="Post" />
        </Row>
        <Row label="Status:" id="status" className="mt-[6px]">
          <Select id="status" value="Auftrag" />
        </Row>
      </div>
      <div className="shrink-0">
        <Row label="Vertriebspartner:" id="partner" className="" icon={<GridIcon />}>
          <Text id="partner" value="Herr Georg Beetzerl" />
        </Row>
        <Row label="Fachberater:" id="berater" className="mt-[6px]" icon={<GridIcon />}>
          <Text id="berater" value="Herr Georg Beetzerl" />
        </Row>
        <div className="mt-1 flex items-start">
          <label htmlFor="bemerkung" className="w-[124px] shrink-0 pt-1">Bemerkung:</label>
          <div className="flex h-[116px] w-[227px] border border-[#7a7a7a] bg-white p-px">
            <textarea id="bemerkung" className="flex-1 resize-none outline-none" />
            <div className="flex w-4 flex-col items-center justify-between bg-[#f0f0f0] py-1 text-[#b5b5b5]">
              <ChevronIcon className="size-[10px] rotate-180" />
              <ChevronIcon />
            </div>
          </div>
          <button type="button" aria-label="Bemerkung bearbeiten" className="mt-[5px] ml-[6px]"><PencilIcon /></button>
        </div>
      </div>
    </div>
  </form>
);

const DetailPanel = () => (
  <section className="mt-[2px] flex flex-1 flex-col border border-[#a0a0a0] pt-[9px] pr-[6px] pb-[2px] pl-px">
    <h2 className="mr-1 ml-[7px] h-[26px] border border-[#7a7a7a] bg-[#6495ed] pl-[9px] leading-[23px] font-bold whitespace-pre text-white shadow-[inset_0_0_0_1px_#fff]">
      {"Interessent  -  Daum, Sigrid [110-02]"}
    </h2>
    <nav className="mt-px flex h-[23px] items-end pl-[2px]">
      {tabs.map((tab, i) =>
        i === 2 ? (
          <button key={tab.title} type="button" className={`relative z-10 -mb-px flex h-6 items-center justify-center gap-1 border border-b-0 border-[#d9d9d9] bg-white pb-[3px] whitespace-nowrap ${tab.width}`}>
            {tab.icon}
            {tab.title}
          </button>
        ) : (
          <button key={tab.title} type="button" className={`flex h-[22px] items-center justify-center gap-1 border-t border-r border-[#d9d9d9] whitespace-nowrap first:border-l ${tab.width}`}>
            {tab.icon}
            {i === 0 ? <span><u className="underline-offset-2">A</u>llgemein</span> : tab.title}
          </button>
        )
      )}
    </nav>
    <div className="flex-1 border border-[#d9d9d9] bg-white pt-[14px] pl-[15px]">
      <ContactForm />
    </div>
  </section>
);

const App = () => {
  return (
    <div className="flex min-h-screen flex-col bg-white font-[Roboto,sans-serif] text-[12px] leading-4 text-black">
      <TitleBar />
      <main className="flex flex-1 gap-[3px] border border-[#a0a0a0] bg-[#f0f0f0] pt-[5px] pr-[7px] pl-1">
        <aside className="flex w-[209px] shrink-0 flex-col gap-1 pb-2">
          <FilterList title="Versandunterlage" className="h-[131px]" items={[{ label: "Katalog", icon: <DocsIcon /> }]} />
          <FilterList title="Versandart" className="h-[131px]" items={[{ label: "Post", icon: <NotepadIcon /> }]} />
          <FilterList title="Anfrageeingang" className="h-[262px]" items={inquiryItems} />
          <FilterList title="Status" className="flex-1 pr-[18px]" items={statusItems} />
        </aside>
        <div className="flex min-w-0 flex-1 flex-col pb-1">
          <FilterBar />
          <SearchRow />
          <ResultTable />
          <div className="mt-[2px] h-[6px] bg-[#a0a0a0]" />
          <DetailPanel />
        </div>
      </main>
      <footer>
        <nav className="flex h-[25px] items-center pl-[2px]">
          {openWindows.map((win, i) => (
            <button
              key={i}
              type="button"
              className={`flex h-[21px] w-[120px] shrink-0 items-center gap-1 border pl-[2px] whitespace-nowrap ${
                i === openWindows.length - 1 ? "border-[#99d1ff] bg-[#cce8ff]" : "border-transparent"
              }`}
            >
              {win.icon}
              {win.label}
            </button>
          ))}
        </nav>
        <div className="flex h-6 border-t-2 border-[#d9d9d9] bg-[#f0f0f0]">
          {statusCells.map((cell, i) => (
            <span key={i} className={`border-r border-[#d9d9d9] leading-[22px] ${cell.width} ${cell.text.length > 2 ? "pl-1" : "text-center"}`}>
              {cell.text}
            </span>
          ))}
        </div>
      </footer>
    </div>
  );
};

export default App;
